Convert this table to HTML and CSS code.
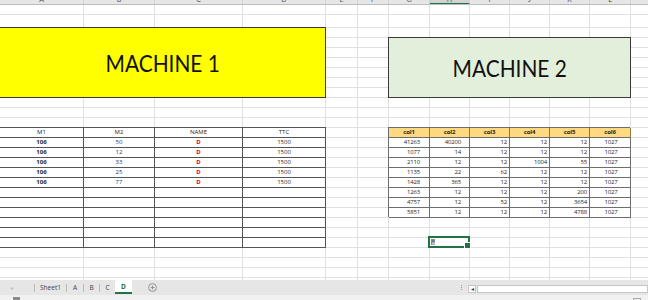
FILE: index.html
```html
<!DOCTYPE html>
<html>
<head>
<meta charset="utf-8">
<link rel="stylesheet" href="styles.css">
</head>
<body>
<div class="app">
  <div class="colhead">
    <div>A</div><div>B</div><div>C</div><div>D</div><div>E</div><div>F</div><div>G</div><div class="hsel">H</div><div>I</div><div>J</div><div>K</div><div>L</div><div>M</div>
  </div>
  <div class="sheet">
    <div class="box box1"><span>MACHINE 1</span></div>
    <div class="box box2"><span>MACHINE 2</span></div>

    <div class="ltable">
      <div class="c">M1</div><div class="c">M2</div><div class="c">NAME</div><div class="c">TTC</div>
      <div class="c b">106</div><div class="c n">50</div><div class="c r">D</div><div class="c">1500</div>
      <div class="c b">106</div><div class="c n">12</div><div class="c r">D</div><div class="c">1500</div>
      <div class="c b">106</div><div class="c n">33</div><div class="c r">D</div><div class="c">1500</div>
      <div class="c b">106</div><div class="c n">25</div><div class="c r">D</div><div class="c">1500</div>
      <div class="c b">106</div><div class="c n">77</div><div class="c r">D</div><div class="c">1500</div>
      <div class="c"></div><div class="c"></div><div class="c"></div><div class="c"></div>
      <div class="c"></div><div class="c"></div><div class="c"></div><div class="c"></div>
      <div class="c"></div><div class="c"></div><div class="c"></div><div class="c"></div>
      <div class="c"></div><div class="c"></div><div class="c"></div><div class="c"></div>
      <div class="c"></div><div class="c"></div><div class="c"></div><div class="c"></div>
      <div class="c"></div><div class="c"></div><div class="c"></div><div class="c"></div>
    </div>

    <div class="rtable">
      <div class="h">col1</div><div class="h">col2</div><div class="h">col3</div><div class="h">col4</div><div class="h">col5</div><div class="h">col6</div>
      <div class="d">41263</div><div class="d">40200</div><div class="d">12</div><div class="d">12</div><div class="d">12</div><div class="d">1027</div>
      <div class="d">1077</div><div class="d">14</div><div class="d">12</div><div class="d">12</div><div class="d">12</div><div class="d">1027</div>
      <div class="d">2110</div><div class="d">12</div><div class="d">12</div><div class="d">1004</div><div class="d">55</div><div class="d">1027</div>
      <div class="d">1135</div><div class="d">22</div><div class="d">62</div><div class="d">12</div><div class="d">12</div><div class="d">1027</div>
      <div class="d">1428</div><div class="d">365</div><div class="d">12</div><div class="d">12</div><div class="d">12</div><div class="d">1027</div>
      <div class="d">1263</div><div class="d">12</div><div class="d">12</div><div class="d">12</div><div class="d">200</div><div class="d">1027</div>
      <div class="d">4757</div><div class="d">12</div><div class="d">52</div><div class="d">12</div><div class="d">3654</div><div class="d">1027</div>
      <div class="d">5851</div><div class="d">12</div><div class="d">12</div><div class="d">12</div><div class="d">4788</div><div class="d">1027</div>
    </div>

    <div class="selcell">
      <svg class="pasteicon" width="5" height="6" viewBox="0 0 5 6"><rect x="0" y="0" width="4" height="6" fill="#8a8a8a"/><rect x="1" y="1" width="2" height="2" fill="#5e7fa8"/><rect x="1" y="3.5" width="3" height="2" fill="#c9c9c9"/></svg>
    </div>
  </div>

  <div class="tabbar">
    <div class="tabs-area">
      <div class="nav">&#9656;</div>
      <div class="sep"></div>
      <div class="tab t-sheet">Sheet1</div>
      <div class="sep"></div>
      <div class="tab t-a">A</div>
      <div class="sep"></div>
      <div class="tab t-b">B</div>
      <div class="sep"></div>
      <div class="tab t-c">C</div>
      <div class="tab t-d">D</div>
      <svg class="plus" width="9" height="9" viewBox="0 0 9 9"><circle cx="4.5" cy="4.5" r="3.9" fill="none" stroke="#8a8a8a" stroke-width="0.9"/><path d="M4.5 2.6v3.8M2.6 4.5h3.8" stroke="#8a8a8a" stroke-width="0.9"/></svg>
    </div>
    <div class="split"><i></i><i></i><i></i></div>
    <div class="hscroll">
      <div class="sb-btn">&#9666;</div>
      <div class="sb-track"></div>
    </div>
  </div>
  <div class="status">
    <div class="st-left"></div>
    <div class="st-right"></div>
  </div>
</div>
</body>
</html>
```

FILE: styles.css
```css
* { box-sizing: border-box; margin: 0; padding: 0; }
html, body { width: 648px; height: 300px; overflow: hidden; background: #fff; }
body { font-family: Lato, "Open Sans", sans-serif; color: #333; }

.app { display: flex; flex-direction: column; width: 648px; height: 300px; overflow: hidden; }

.colhead {
  display: grid;
  grid-template-columns: 84px 71px 88px 83px 32px 31px 41px 40px 40px 40px 40px 41px 60px;
  height: 5px;
  flex: none;
  background: #e6e6e6;
  border-bottom: 1px solid #bdbdbd;
  overflow: hidden;
}
.colhead div {
  margin-top: -5px;
  border-right: 1px solid #d2d2d2;
  font-size: 7px;
  line-height: 8px;
  text-align: center;
  color: #555;
}
.colhead .hsel { background: #d3d3d3; border-bottom: 2px solid #217346; color: #217346; }

.sheet {
  display: grid;
  grid-template-columns: 84px 71px 88px 83px 32px 31px 41px 40px 40px 40px 40px 41px 60px;
  grid-template-rows: 10px 13px repeat(26, 10px);
  height: 275px;
  flex: none;
  overflow: hidden;
  background:
    linear-gradient(#e0e0e0, #e0e0e0) 83px 0 / 1px 100% no-repeat,
    linear-gradient(#e0e0e0, #e0e0e0) 154px 0 / 1px 100% no-repeat,
    linear-gradient(#e0e0e0, #e0e0e0) 242px 0 / 1px 100% no-repeat,
    linear-gradient(#e0e0e0, #e0e0e0) 325px 0 / 1px 100% no-repeat,
    linear-gradient(#e0e0e0, #e0e0e0) 357px 0 / 1px 100% no-repeat,
    linear-gradient(#e0e0e0, #e0e0e0) 388px 0 / 1px 100% no-repeat,
    linear-gradient(#e0e0e0, #e0e0e0) 429px 0 / 1px 100% no-repeat,
    linear-gradient(#e0e0e0, #e0e0e0) 469px 0 / 1px 100% no-repeat,
    linear-gradient(#e0e0e0, #e0e0e0) 509px 0 / 1px 100% no-repeat,
    linear-gradient(#e0e0e0, #e0e0e0) 549px 0 / 1px 100% no-repeat,
    linear-gradient(#e0e0e0, #e0e0e0) 589px 0 / 1px 100% no-repeat,
    linear-gradient(#e0e0e0, #e0e0e0) 630px 0 / 1px 100% no-repeat,
    linear-gradient(#e0e0e0, #e0e0e0) 0 9px / 100% 1px no-repeat,
    linear-gradient(#e0e0e0, #e0e0e0) 0 22px / 100% 1px no-repeat,
    repeating-linear-gradient(transparent 0 9px, #e0e0e0 9px 10px) 0 23px / 100% 260px no-repeat,
    #fff;
}

.box {
  display: flex;
  align-items: center;
  justify-content: center;
  border: 1px solid #3a3a3a;
  margin-top: -1px;
  font-size: 24px;
  color: #111;
}
.box span { display: inline-block; transform: scaleX(0.87); white-space: nowrap; }
.box1 { grid-column: 1 / 5; grid-row: 3 / 10; background: #ffff00; border-left: 0; }
.box2 { grid-column: 7 / 13; grid-row: 4 / 10; background: #e2efda; margin-left: -1px; }

.ltable {
  grid-column: 1 / 5;
  grid-row: 13 / 25;
  display: grid;
  grid-template-columns: subgrid;
  grid-template-rows: subgrid;
  box-shadow: 0 -1px 0 #555;
  background: #fff;
}
.ltable .c {
  border-right: 1px solid #555;
  border-bottom: 1px solid #555;
  font-family: "Open Sans", Lato, sans-serif;
  font-size: 6px;
  line-height: 9px;
  text-align: center;
  color: #262626;
}
.ltable .b { font-weight: 700; color: #262626; }
.ltable .n { color: #1f3763; }
.ltable .r { color: #e8000b; font-weight: 700; }

.rtable {
  grid-column: 7 / 13;
  grid-row: 13 / 22;
  display: grid;
  grid-template-columns: subgrid;
  grid-template-rows: subgrid;
  box-shadow: -1px -1px 0 #6d6d6d;
  background: #fff;
}
.rtable .h, .rtable .d {
  border-right: 1px solid #6d6d6d;
  border-bottom: 1px solid #6d6d6d;
  font-family: "Open Sans", Lato, sans-serif;
  font-size: 6px;
  line-height: 9px;
  color: #262626;
  letter-spacing: -0.2px;
}
.rtable .h { background: #fed980; font-weight: 700; text-align: center; border-right-color: #8d7a48; }
.rtable .d { text-align: right; padding-right: 2px; }
.rtable .d:nth-child(6n+1) { padding-right: 9px; }
.rtable .d:nth-child(6n+2) { padding-right: 8px; }
.rtable .d:nth-child(6n) { text-align: center; padding-right: 0; padding-left: 2px; }

.selcell {
  grid-column: 8;
  grid-row: 24;
  margin: -2px 0 0 -2px;
  border: 2px solid #217346;
  position: relative;
  display: flex;
  align-items: flex-end;
  padding: 0 0 1px 1px;
}
.selcell::after {
  content: "";
  position: absolute;
  right: -3px;
  bottom: -3px;
  width: 5px;
  height: 5px;
  background: #217346;
  border: 1px solid #fff;
}
.pasteicon { display: block; }

.tabbar {
  display: flex;
  height: 15px;
  flex: none;
  background: #e6e6e6;
  font-family: "Open Sans", Lato, sans-serif;
  font-size: 6.5px;
  color: #444;
}
.tabs-area { display: flex; width: 460px; align-items: stretch; }
.nav { width: 34px; display: flex; align-items: center; padding-left: 11px; color: #c2c2c2; font-size: 6px; }
.sep { width: 1px; background: #b9b9b9; margin: 4px 0 3px; }
.tab { display: flex; align-items: center; justify-content: center; }
.t-sheet { width: 31px; }
.t-a { width: 16px; }
.t-b { width: 15px; }
.t-c { width: 15px; }
.t-d {
  width: 17px;
  background: #fff;
  color: #217346;
  font-weight: 700;
  border-bottom: 2px solid #217346;
  margin-bottom: 1px;
}
.plus { align-self: center; margin-left: 16px; }
.split { width: 3px; display: flex; flex-direction: column; align-items: center; justify-content: center; gap: 1px; }
.split i { display: block; width: 1px; height: 1px; background: #9a9a9a; }
.hscroll { flex: 1; display: flex; margin: 5px 0 0 5px; height: 8px; }
.sb-btn {
  width: 8px;
  background: #fff;
  border: 1px solid #c6c6c6;
  font-size: 6px;
  line-height: 6px;
  color: #444;
  text-align: center;
}
.sb-track { flex: 1; margin-left: 1px; background: #fff; border: 1px solid #c6c6c6; }

.status { height: 5px; flex: none; background: #f1f1f1; display: flex; justify-content: space-between; align-items: flex-end; padding: 0 7px 0 13px; }
.st-left { width: 7px; height: 3px; background: #8a8a8a; }
.st-right { width: 8px; height: 2px; border: 1px solid #a8a8a8; border-bottom: 0; }
```
